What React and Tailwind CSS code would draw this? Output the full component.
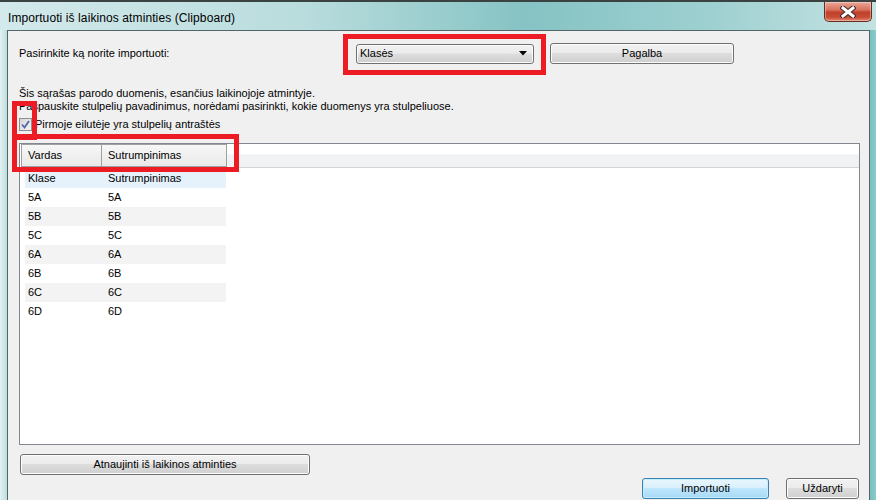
const ROWS = [
  ['Klase', 'Sutrumpinimas'],
  ['5A', '5A'],
  ['5B', '5B'],
  ['5C', '5C'],
  ['6A', '6A'],
  ['6B', '6B'],
  ['6C', '6C'],
  ['6D', '6D'],
];

const BTN = 'border border-[#707070] rounded-[3px] bg-[linear-gradient(#f2f2f2_0%,#ebebeb_45%,#dddddd_50%,#cfcfcf_100%)] shadow-[inset_0_0_0_1px_#fcfcfc] flex items-center justify-center text-[11px] text-black';

function CloseButton() {
  return (
    <div className="w-[48px] h-[20px] mr-[4px] rounded-b-[5px] border border-t-0 border-[#6b2b22] bg-[linear-gradient(#e9a899_0%,#d8735f_40%,#c0412b_55%,#c84c33_80%,#e08a70_100%)] shadow-[inset_0_0_0_1px_rgba(255,255,255,0.35)] flex items-center justify-center">
      <svg width="16" height="12" viewBox="0 0 16 12">
        <path d="M3 2 L13 10 M13 2 L3 10" stroke="#3b2a28" strokeWidth="5" strokeLinecap="square" />
        <path d="M3 2 L13 10 M13 2 L3 10" stroke="#ffffff" strokeWidth="3" strokeLinecap="square" />
      </svg>
    </div>
  );
}

function Checkbox() {
  return (
    <div className="w-[13px] h-[13px] border border-[#8e8f8f] bg-[linear-gradient(135deg,#d6d6d6,#f4f4f4)] flex items-center justify-center">
      <svg width="9" height="9" viewBox="0 0 9 9">
        <path d="M1 4.5 L3.5 7.5 L8 1" fill="none" stroke="#5466a6" strokeWidth="1.8" />
      </svg>
    </div>
  );
}

function Grid() {
  return (
    <div className="ml-[11px] w-[841px] h-[302px] border border-[#828790] bg-white flex flex-col">
      <div className="flex h-[24px] border-b border-[#d5d5d5]">
        <div className="w-[1px]" />
        <div className="w-[81px] h-[23px] border border-[#a0a0a0] bg-[linear-gradient(#f7f7f7,#e9e9e9)] flex items-center pl-[6px]">Vardas</div>
        <div className="w-[125px] h-[23px] border border-l-0 border-[#a0a0a0] bg-[linear-gradient(#f7f7f7,#e9e9e9)] flex items-center pl-[6px]">Sutrumpinimas</div>
        <div className="flex-1 bg-[linear-gradient(#ffffff_0%,#ffffff_45%,#f1f2f4_46%,#f1f2f4_100%)]" />
      </div>
      <div className="flex flex-col pl-[5px] pt-[1px]">
        {ROWS.map((r, i) => (
          <div key={i} className={`flex w-[201px] h-[19px] items-center ${i === 0 ? 'bg-[#e5f1fb]' : i % 2 === 0 ? 'bg-[#f3f3f3]' : 'bg-white'}`}>
            <div className="w-[76px] pl-[3px]">{r[0]}</div>
            <div className="pl-[7px]">{r[1]}</div>
          </div>
        ))}
      </div>
    </div>
  );
}

export default function App() {
  return (
    <div className="relative w-[876px] h-[500px] overflow-hidden bg-[linear-gradient(90deg,#d3e9eb_0%,#b9dcdd_35%,#86c3c4_60%,#9ccfd0_80%,#c4e2e2_100%)] text-[11px] text-black" style={{ fontFamily: '"Liberation Sans", Arial, sans-serif' }}>
      <div className="h-[30px] border-t-2 border-[#3a4342] flex justify-between items-start">
        <div className="pl-[8px] pt-[7px] text-[12px] tracking-[0.1px] text-black">Importuoti iš laikinos atminties (Clipboard)</div>
        <CloseButton />
      </div>
      <div className="flex h-[470px]">
        <div className="w-[7px] bg-[linear-gradient(90deg,#e3f1f2,#bfdede)]" />
        <div className="flex-1 bg-[#f0f0f0] border-l border-t border-[#52666a] flex flex-col">
          <div className="flex items-center pl-[11px] pt-[12px]">
            <div className="w-[337px]">Pasirinkite ką norite importuoti:</div>
            <div className={`${BTN} w-[178px] h-[20px] !justify-between px-[3px]`}>
              <span>Klasės</span>
              <svg width="8" height="5" viewBox="0 0 8 5" className="mr-[3px]"><path d="M0 0 H8 L4 4.5 Z" fill="#000" /></svg>
            </div>
            <div className={`${BTN} ml-[16px] w-[184px] h-[21px]`}>Pagalba</div>
          </div>
          <div className="pl-[11px] pt-[23px] leading-[13px]">
            <div>Šis sąrašas parodo duomenis, esančius laikinojoje atmintyje.</div>
            <div>Paspauskite stulpelių pavadinimus, norėdami pasirinkti, kokie duomenys yra stulpeliuose.</div>
          </div>
          <div className="pl-[11px] pt-[3px] flex items-center gap-[3px]">
            <Checkbox />
            <span>Pirmoje eilutėje yra stulpelių antraštės</span>
          </div>
          <div className="pt-[10px]">
            <Grid />
          </div>
          <div className="pl-[12px] pt-[9px]">
            <div className={`${BTN} w-[290px] h-[21px]`}>Atnaujinti iš laikinos atminties</div>
          </div>
          <div className="flex justify-end pr-[10px] pt-[3px] gap-[17px]">
            <div className="w-[127px] h-[21px] border border-[#3c7fb1] rounded-[3px] bg-[linear-gradient(#eaf6fd_0%,#d9f0fc_45%,#bee6fd_50%,#a7d9f5_100%)] shadow-[inset_0_0_0_1px_#c4f0fd] flex items-center justify-center">Importuoti</div>
            <div className={`${BTN} w-[73px] h-[21px]`}>Uždaryti</div>
          </div>
        </div>
        <div className="w-[7px] border-l border-[#52666a] bg-[linear-gradient(90deg,#79c0c0,#8ccaca)]" />
      </div>
      <div className="absolute left-[343px] top-[34px] w-[203px] h-[41px] border-[5px] border-[#ed1c24]" />
      <div className="absolute left-[12px] top-[101px] w-[25px] h-[39px] border-[5px] border-[#ed1c24]" />
      <div className="absolute left-[12px] top-[134px] w-[227px] h-[38px] border-[5px] border-[#ed1c24]" />
    </div>
  );
}
